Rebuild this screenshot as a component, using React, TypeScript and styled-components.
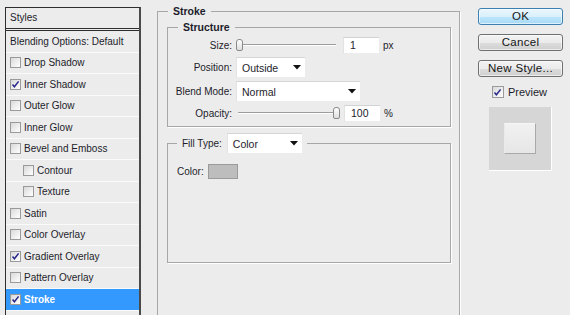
import React from "react";
import styled, { createGlobalStyle } from "styled-components";

const GlobalStyle = createGlobalStyle`
  html, body { margin: 0; padding: 0; }
  body {
    background: #ececec;
    font-family: "Liberation Sans", Arial, sans-serif;
    font-size: 10px;
    color: #1d1d2b;
    overflow: hidden;
  }
`;

const Page = styled.div`
  display: flex;
  align-items: flex-start;
  width: 570px;
  height: 315px;
  overflow: hidden;
  background: #ececec;
`;

/* ---------- left styles list ---------- */
const StylesPanel = styled.div`
  box-sizing: border-box;
  margin: 7px 0 0 5px;
  width: 136px;
  height: 330px;
  flex: none;
  border: 1px solid #2e2e2e;
  border-right: 2px solid #4a4a4a;
  border-bottom: none;
  background: #ececec;
`;

const PanelHeader = styled.div`
  height: 20px;
  line-height: 20px;
  padding-left: 4px;
  border-bottom: 3px double #2e2e2e;
`;

const StyleRow = styled.div<{ $selected?: boolean; $indent?: boolean; $plain?: boolean }>`
  box-sizing: border-box;
  height: 21.5px;
  display: flex;
  align-items: center;
  gap: 3px;
  padding-left: ${(p) => (p.$plain ? 4 : p.$indent ? 17 : 4)}px;
  border-bottom: 1px solid #fafafa;
  background: ${(p) => (p.$selected ? "#3399ff" : "transparent")};
  color: ${(p) => (p.$selected ? "#ffffff" : "#1d1d2b")};
  font-weight: ${(p) => (p.$selected ? 700 : 400)};
  white-space: nowrap;
`;

const Box = styled.span<{ $size?: number }>`
  box-sizing: border-box;
  width: ${(p) => p.$size ?? 11}px;
  height: ${(p) => p.$size ?? 11}px;
  flex: none;
  border: 1px solid #9a9a9a;
  background: linear-gradient(135deg, #d9d9d9 0%, #f4f4f4 70%, #ffffff 100%);
  display: flex;
  align-items: center;
  justify-content: center;
`;

const Check: React.FC<{ checked?: boolean; size?: number }> = ({ checked, size }) => (
  <Box $size={size}>
    {checked && (
      <svg width="9" height="9" viewBox="0 0 9 9">
        <path d="M1.5 4.6 L3.4 6.8 L7.6 1.4" fill="none" stroke="#27278a" strokeWidth="1.5" />
      </svg>
    )}
  </Box>
);

/* ---------- middle group boxes ---------- */
const Group = styled.fieldset<{ $height?: number; $width?: number; $gap?: number }>`
  box-sizing: border-box;
  margin: ${(p) => p.$gap ?? 0}px 0 0 0;
  padding: 0;
  min-width: 0;
  ${(p) => (p.$width ? `width: ${p.$width}px;` : "")}
  ${(p) => (p.$height ? `height: ${p.$height}px;` : "")}
  border: 1px solid #a7a7a7;
  box-shadow: 1px 1px 0 #ffffff;
`;

const StrokeGroup = styled(Group)`
  flex: none;
  margin: 5px 0 0 16px;
`;

const Legend = styled.legend<{ $offset?: number }>`
  margin-left: ${(p) => p.$offset ?? 10}px;
  padding: 0 5px;
  line-height: 12px;
  font-size: 10.5px;
  font-weight: 700;
  color: #1d1d2b;
`;

const FillLegend = styled.legend`
  margin-left: 9px;
  padding: 0 5px;
  display: flex;
  align-items: center;
  gap: 5px;
  height: 20px;
`;

const GroupBody = styled.div`
  padding: 4px 8px 0 9px;
`;

const FormGrid = styled.div`
  display: grid;
  grid-template-columns: 64px auto;
  grid-template-rows: 16px 20px 20px 16px;
  column-gap: 4px;
  row-gap: 4px;
  padding: 4px 0 5px 0;
  align-items: center;
`;

const Label = styled.span`
  text-align: right;
  white-space: nowrap;
`;

const Control = styled.div`
  display: flex;
  align-items: center;
`;

const SliderTrack = styled.div`
  position: relative;
  width: 104px;
  height: 12px;
  &::before {
    content: "";
    position: absolute;
    left: 2px;
    right: 4px;
    top: 5px;
    height: 1px;
    background: #9d9d9d;
    box-shadow: 0 1px 0 #ffffff;
  }
`;

const Thumb = styled.span`
  position: absolute;
  top: 0;
  width: 7px;
  height: 12px;
  box-sizing: border-box;
  border: 1px solid #8a8a8a;
  border-radius: 3px 3px 2px 2px;
  background: linear-gradient(#ffffff, #dedede);
`;

const Slider: React.FC<{ value: number }> = ({ value }) => (
  <SliderTrack>
    <Thumb style={{ left: `${value * 97}px` }} />
  </SliderTrack>
);

const NumInput = styled.div<{ $shift?: number }>`
  box-sizing: border-box;
  margin-left: ${(p) => p.$shift ?? 3}px;
  width: 36px;
  height: 16px;
  line-height: 15px;
  padding-left: 6px;
  background: #ffffff;
  border-top: 1px solid #d2d2d2;
  border-left: 1px solid #e2e2e2;
  font-size: 10.5px;
`;

const Unit = styled.span`
  margin-left: 4px;
`;

const SelectBox = styled.div<{ $width: number }>`
  box-sizing: border-box;
  width: ${(p) => p.$width}px;
  height: 20px;
  display: flex;
  align-items: center;
  justify-content: space-between;
  padding: 0 4px 0 5px;
  background: #ffffff;
  border-top: 1px solid #d5d5d5;
  border-left: 1px solid #e3e3e3;
  font-size: 10.5px;
  font-weight: 400;
  color: #1d1d2b;
`;

const Arrow = () => (
  <svg width="8" height="5" viewBox="0 0 8 5">
    <path d="M0 0 H8 L4 4.5 Z" fill="#111" />
  </svg>
);

const Select: React.FC<{ width: number; value: string }> = ({ width, value }) => (
  <SelectBox $width={width}>
    <span>{value}</span>
    <Arrow />
  </SelectBox>
);

const FillLabel = styled.span`
  font-size: 10px;
  font-weight: 400;
`;

const ColorBody = styled.div`
  box-sizing: border-box;
  height: 109px;
  padding: 11px 0 0 9px;
  display: flex;
  align-items: flex-start;
  gap: 4px;
`;

const ColorLabel = styled.span`
  line-height: 15px;
`;

const Swatch = styled.div`
  width: 30px;
  height: 15px;
  box-sizing: border-box;
  background: #bdbdbd;
  border: 1px solid #9b9b9b;
`;

/* ---------- right column ---------- */
const RightCol = styled.div`
  flex: none;
  width: 85px;
  margin-left: 18px;
  padding-top: 8px;
  display: flex;
  flex-direction: column;
  align-items: center;
  gap: 9px;
`;

const Button = styled.div<{ $primary?: boolean }>`
  box-sizing: border-box;
  width: 85px;
  height: 17px;
  line-height: 15px;
  text-align: center;
  border-radius: 3px;
  font-size: 11.5px;
  letter-spacing: 0.3px;
  color: #151515;
  border: 1px solid ${(p) => (p.$primary ? "#3c7fb1" : "#707070")};
  background: ${(p) =>
    p.$primary
      ? "linear-gradient(#eaf6fd 0%, #d9f0fc 50%, #bee6fd 51%, #a7d9f5 100%)"
      : "linear-gradient(#f2f2f2 0%, #ebebeb 50%, #dddddd 51%, #cfcfcf 100%)"};
  box-shadow: inset 0 0 0 1px rgba(255, 255, 255, 0.6);
`;

const PreviewRow = styled.div`
  display: flex;
  align-items: center;
  gap: 4px;
  font-size: 11px;
  margin-left: -2px;
`;

const PreviewOuter = styled.div`
  width: 63px;
  height: 64px;
  box-sizing: border-box;
  background: #d6d6d6;
  border-right: 1px solid #ffffff;
  border-bottom: 1px solid #ffffff;
  display: flex;
  align-items: center;
  justify-content: center;
`;

const PreviewInner = styled.div`
  width: 32px;
  height: 31px;
  box-sizing: border-box;
  background: linear-gradient(#f1f1f1, #e6e6e6);
  border-top: 1px solid #f6f6f6;
  border-left: 1px solid #eaeaea;
  border-right: 1px solid #a9a9a9;
  border-bottom: 1px solid #a9a9a9;
`;

const styleItems: { name: string; checked?: boolean; indent?: boolean; selected?: boolean }[] = [
  { name: "Drop Shadow" },
  { name: "Inner Shadow", checked: true },
  { name: "Outer Glow" },
  { name: "Inner Glow" },
  { name: "Bevel and Emboss" },
  { name: "Contour", indent: true },
  { name: "Texture", indent: true },
  { name: "Satin" },
  { name: "Color Overlay" },
  { name: "Gradient Overlay", checked: true },
  { name: "Pattern Overlay" },
  { name: "Stroke", checked: true, selected: true },
];

export default function App() {
  return (
    <>
      <GlobalStyle />
      <Page>
        <StylesPanel>
          <PanelHeader>Styles</PanelHeader>
          <StyleRow $plain>Blending Options: Default</StyleRow>
          {styleItems.map((it) => (
            <StyleRow key={it.name} $indent={it.indent} $selected={it.selected}>
              <Check checked={it.checked} />
              <span>{it.name}</span>
            </StyleRow>
          ))}
          <StyleRow $plain />
        </StylesPanel>

        <StrokeGroup $width={303} $height={340}>
          <Legend>Stroke</Legend>
          <GroupBody>
            <Group>
              <Legend>Structure</Legend>
              <FormGrid>
                <Label>Size:</Label>
                <Control>
                  <Slider value={0} />
                  <NumInput>1</NumInput>
                  <Unit>px</Unit>
                </Control>
                <Label>Position:</Label>
                <Control>
                  <Select width={69} value="Outside" />
                </Control>
                <Label>Blend Mode:</Label>
                <Control>
                  <Select width={124} value="Normal" />
                </Control>
                <Label>Opacity:</Label>
                <Control>
                  <Slider value={1} />
                  <NumInput $shift={4}>100</NumInput>
                  <Unit>%</Unit>
                </Control>
              </FormGrid>
            </Group>
            <Group $gap={6}>
              <FillLegend>
                <FillLabel>Fill Type:</FillLabel>
                <Select width={75} value="Color" />
              </FillLegend>
              <ColorBody>
                <ColorLabel>Color:</ColorLabel>
                <Swatch />
              </ColorBody>
            </Group>
          </GroupBody>
        </StrokeGroup>

        <RightCol>
          <Button $primary>OK</Button>
          <Button>Cancel</Button>
          <Button>New Style...</Button>
          <PreviewRow>
            <Check checked size={12} />
            <span>Preview</span>
          </PreviewRow>
          <PreviewOuter>
            <PreviewInner />
          </PreviewOuter>
        </RightCol>
      </Page>
    </>
  );
}
